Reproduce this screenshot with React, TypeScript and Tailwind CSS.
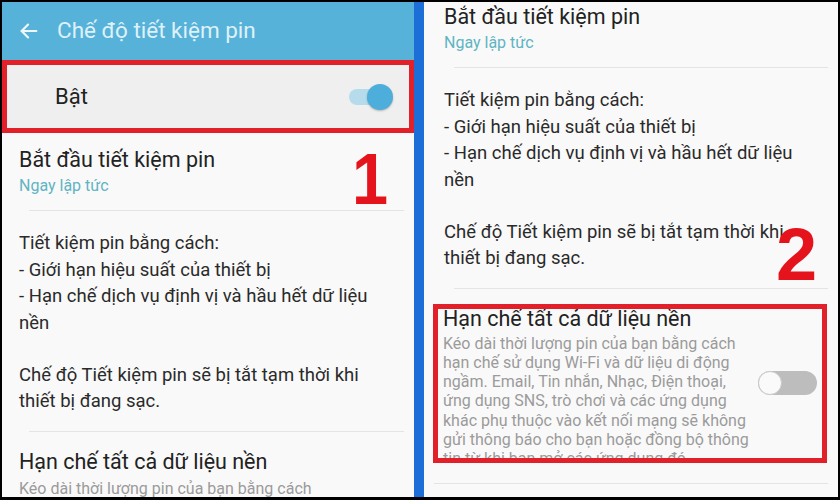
import React from 'react';

const FONT = { fontFamily: 'Roboto, "Noto Sans", sans-serif' };

function ToggleOn() {
  return (
    <div className="relative w-[44px] h-[26px] flex items-center">
      <div className="w-[38px] h-[16px] rounded-full bg-[#b6dcec]" />
      <div className="absolute right-0 top-0 w-[26px] h-[26px] rounded-full bg-[#4eaedb] shadow-[0_1px_2px_rgba(0,0,0,0.25)]" />
    </div>
  );
}

function ToggleOff() {
  return (
    <div className="relative w-[59px] h-[24px] rounded-full bg-[#bdbdbd]">
      <div className="absolute left-0 top-0 w-[24px] h-[24px] rounded-full bg-[#fafafa] border border-[#c9c9c9]" />
    </div>
  );
}

function Divider() {
  return <div className="mx-[10px] h-px bg-[#e4e4e4]" />;
}

// shared block: start + description, used by both panels
function SettingsBody() {
  return (
    <>
      <div className="pt-[14px] pb-[14px]">
        <div className="text-[21.5px] leading-[26px] text-[#222]">Bắt đầu tiết kiệm pin</div>
        <div className="mt-[3px] text-[16px] leading-[20px] text-[#5fb4c3]">Ngay lập tức</div>
      </div>
      <Divider />
      <div className="pt-[19px] pb-[16px] text-[18.5px] leading-[26.5px] text-[#2a2a2a]">
        <div>Tiết kiệm pin bằng cách:</div>
        <div>- Giới hạn hiệu suất của thiết bị</div>
        <div>- Hạn chế dịch vụ định vị và hầu hết dữ liệu</div>
        <div>nền</div>
        <div className="mt-[25.5px]">Chế độ Tiết kiệm pin sẽ bị tắt tạm thời khi</div>
        <div>thiết bị đang sạc.</div>
      </div>
      <Divider />
    </>
  );
}

export default function App() {
  return (
    <div className="w-[840px] h-[500px] bg-black pt-[2px] px-[2px] pb-[3px] overflow-hidden" style={FONT}>
      <div className="flex h-full">
        {/* Left screen */}
        <div className="relative w-[412px] h-full bg-[#f9f9f9] overflow-hidden">
          <header className="h-[58px] bg-[#57b2d9] flex items-center pl-[16px]">
            <svg width="22" height="22" viewBox="0 0 24 24" fill="none" stroke="#eef8fc" strokeWidth="2.4" strokeLinecap="round" strokeLinejoin="round">
              <path d="M20 12H4" />
              <path d="M11 5l-7 7 7 7" />
            </svg>
            <span className="ml-[17px] text-[22.5px] text-[#def1f8]">Chế độ tiết kiệm pin</span>
          </header>
          <div className="h-[73px] border-[5px] border-[#e2202a] bg-[#efefef] flex items-center justify-between pl-[48px] pr-[16px]">
            <span className="text-[22px] text-[#222]">Bật</span>
            <ToggleOn />
          </div>
          <div className="pl-[17px]">
            <SettingsBody />
          </div>
          <div className="pl-[17px] pt-[17px]">
            <div className="text-[21.5px] leading-[26px] text-[#222]">Hạn chế tất cả dữ liệu nền</div>
            <div className="mt-[4px] text-[16px] leading-[20px] text-[#9b9b9b]">Kéo dài thời lượng pin của bạn bằng cách</div>
          </div>
          <span className="absolute left-[348px] top-[141px] text-[72px] leading-none font-bold text-[#e5141c] scale-x-90" style={{ fontFamily: '"Liberation Sans", Arial, sans-serif' }}>1</span>
        </div>

        {/* Divider bar */}
        <div className="w-[10px] h-full bg-[#1b6fd6]" />

        {/* Right screen (scrolled) */}
        <div className="relative flex-1 h-full bg-[#f9f9f9] overflow-hidden">
          <div className="-mt-[12px] pl-[20px]">
            <SettingsBody />
          </div>
          <div className="mt-[15px] ml-[9px] mr-[11px] h-[159px] border-[5px] border-[#e2202a] overflow-hidden flex items-center pl-[5px] pr-[5px]">
            <div className="flex-1 self-start">
              <div className="text-[21.5px] leading-[20px] text-[#222]">Hạn chế tất cả dữ liệu nền</div>
              <div className="mt-[5px] text-[16px] leading-[19.3px] text-[#9b9b9b]">
                <div>Kéo dài thời lượng pin của bạn bằng cách</div>
                <div>hạn chế sử dụng Wi-Fi và dữ liệu di động</div>
                <div>ngầm. Email, Tin nhắn, Nhạc, Điện thoại,</div>
                <div>ứng dụng SNS, trò chơi và các ứng dụng</div>
                <div>khác phụ thuộc vào kết nối mạng sẽ không</div>
                <div>gửi thông báo cho bạn hoặc đồng bộ thông</div>
                <div>tin từ khi bạn mở các ứng dụng đó.</div>
              </div>
            </div>
            <ToggleOff />
          </div>
          <div className="mt-[20px]">
            <Divider />
          </div>
          <span className="absolute left-[352px] top-[216px] text-[74px] leading-none font-bold text-[#e5141c]" style={{ fontFamily: '"Liberation Sans", Arial, sans-serif' }}>2</span>
        </div>
      </div>
    </div>
  );
}
